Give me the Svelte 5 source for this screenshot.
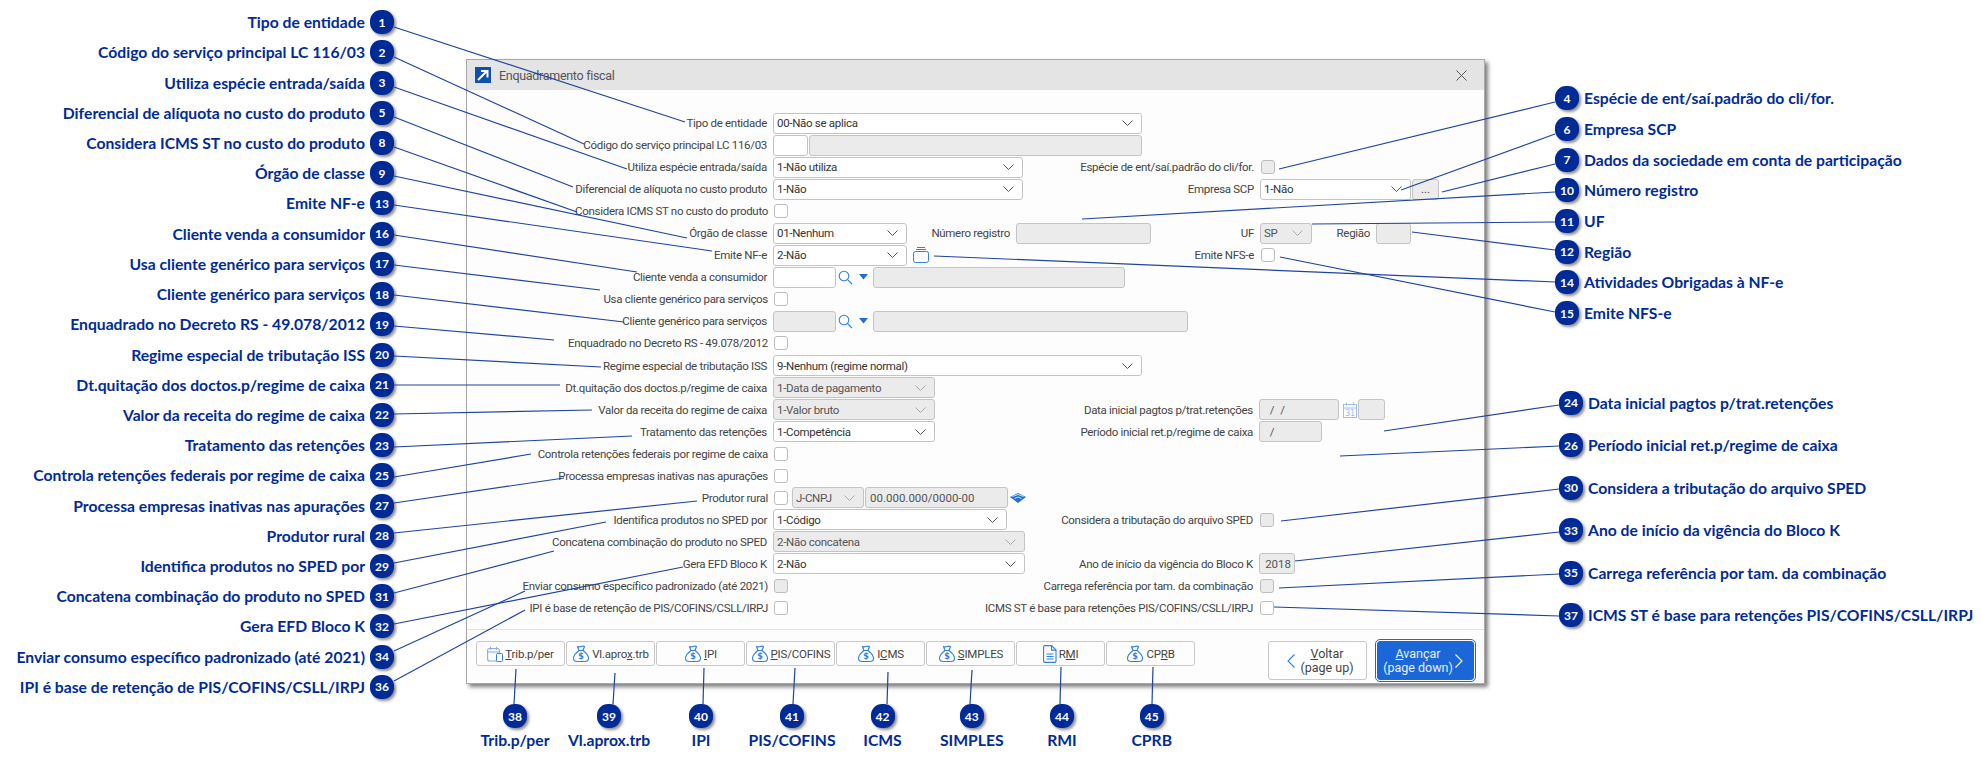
<script lang="ts">
  const left = [
    [1, 'Tipo de entidade'], [2, 'Código do serviço principal LC 116/03'], [3, 'Utiliza espécie entrada/saída'],
    [5, 'Diferencial de alíquota no custo do produto'], [8, 'Considera ICMS ST no custo do produto'], [9, 'Órgão de classe'],
    [13, 'Emite NF-e'], [16, 'Cliente venda a consumidor'], [17, 'Usa cliente genérico para serviços'],
    [18, 'Cliente genérico para serviços'], [19, 'Enquadrado no Decreto RS - 49.078/2012'], [20, 'Regime especial de tributação ISS'],
    [21, 'Dt.quitação dos doctos.p/regime de caixa'], [22, 'Valor da receita do regime de caixa'], [23, 'Tratamento das retenções'],
    [25, 'Controla retenções federais por regime de caixa'], [27, 'Processa empresas inativas nas apurações'], [28, 'Produtor rural'],
    [29, 'Identifica produtos no SPED por'], [31, 'Concatena combinação do produto no SPED'], [32, 'Gera EFD Bloco K'],
    [34, 'Enviar consumo específico padronizado (até 2021)'], [36, 'IPI é base de retenção de PIS/COFINS/CSLL/IRPJ']
  ];
  const rightTop = [
    [4, 'Espécie de ent/saí.padrão do cli/for.'], [6, 'Empresa SCP'], [7, 'Dados da sociedade em conta de participação'],
    [10, 'Número registro'], [11, 'UF'], [12, 'Região'], [14, 'Atividades Obrigadas à NF-e'], [15, 'Emite NFS-e']
  ];
  const rightLow = [
    [24, 'Data inicial pagtos p/trat.retenções'], [26, 'Período inicial ret.p/regime de caixa'], [30, 'Considera a tributação do arquivo SPED'],
    [33, 'Ano de início da vigência do Bloco K'], [35, 'Carrega referência por tam. da combinação'], [37, 'ICMS ST é base para retenções PIS/COFINS/CSLL/IRPJ']
  ];
  const bottom = [
    { n: 38, t: 'Trib.p/per', x: 513 }, { n: 39, t: 'Vl.aprox.trb', x: 611 }, { n: 40, t: 'IPI', x: 701 },
    { n: 41, t: 'PIS/COFINS', x: 791 }, { n: 42, t: 'ICMS', x: 885 }, { n: 43, t: 'SIMPLES', x: 969 },
    { n: 44, t: 'RMI', x: 1064 }, { n: 45, t: 'CPRB', x: 1151 }
  ];
  // slot width = half way to each neighbour, so every callout centres on its own x
  const bottomW = bottom.map((b, i) => {
    const a = i ? (bottom[i - 1].x + b.x) / 2 : b.x - 45;
    const z = i < bottom.length - 1 ? (bottom[i + 1].x + b.x) / 2 : b.x + 45;
    return z - a;
  });

  // leader lines, page coordinates
  const lines = [
    [394, 27, 685, 122], [394, 57, 584, 144], [394, 87, 627, 169], [394, 117, 573, 187], [394, 147, 577, 212],
    [394, 176, 687, 238], [394, 205, 712, 251], [394, 235, 637, 272], [394, 265, 600, 290], [394, 295, 624, 322],
    [394, 326, 554, 340], [394, 356, 601, 367], [394, 385, 560, 385], [394, 414, 592, 410], [394, 447, 632, 436],
    [394, 477, 531, 454], [394, 503, 564, 478], [394, 533, 697, 501], [394, 563, 606, 522], [394, 593, 554, 551],
    [394, 624, 683, 567], [394, 651, 525, 591], [394, 681, 525, 610],
    [1555, 102, 1279, 169], [1555, 134, 1401, 190], [1555, 164, 1442, 192], [1555, 192, 1082, 219], [1555, 222, 1312, 224],
    [1555, 250, 1412, 232], [1555, 282, 934, 256], [1555, 312, 1280, 257],
    [1559, 405, 1384, 431], [1559, 446, 1340, 456], [1559, 489, 1281, 521], [1559, 532, 1295, 561], [1559, 574, 1279, 588], [1559, 616, 1274, 607],
    [516, 669, 514, 704], [615, 673, 613, 704], [704, 668, 703, 704], [795, 668, 793, 704], [888, 672, 887, 704], [972, 670, 970, 704],
    [1061, 667, 1060, 704], [1153, 667, 1152, 704]
  ];
</script>

{#snippet chevron(off = false)}
  <svg class="chev" class:off viewBox="0 0 11 6" width="11" height="6"><path d="M.5.5 5.5 5.5 10.5.5" fill="none" stroke="currentColor" /></svg>
{/snippet}

{#snippet sel(w, text, off = false)}
  <div class="sel {w}" class:off><span>{text}</span>{@render chevron(off)}</div>
{/snippet}

{#snippet lookup()}
  <svg class="lupa" viewBox="0 0 15 15" width="15" height="15"><circle cx="6" cy="6" r="4.8" fill="none" stroke="#2f80e0" stroke-width="1.1" /><path d="M9.6 9.6 14 14" stroke="#2f80e0" stroke-width="1.2" /></svg>
  <svg class="caret" viewBox="0 0 9 6" width="9" height="6"><path d="M0 0h9L4.500 5.500z" fill="#1e6fd9" /></svg>
{/snippet}

{#snippet bag()}
  <svg class="ico" viewBox="0 0 18 18" width="18" height="18">
    <g fill="none" stroke="#2f80e0" stroke-width="1.1" stroke-linejoin="round">
      <path d="M5.500 1.500c1.200.6 2 .6 3.500 0s2.300-.5 3.500 0L11 5.500H7z" />
      <path d="M7 5.500C4 7.800 1.500 10.500 1.500 13.300c0 2.200 1.700 3.200 3.500 3.200h8c1.800 0 3.500-1 3.500-3.200 0-2.800-2.500-5.500-5.500-7.800" />
    </g>
    <text x="9" y="14" text-anchor="middle" class="dollar">$</text>
  </svg>
{/snippet}

{#snippet callout(item, side)}
  <div class="call {side}">
    {#if side === 'l'}<span class="ctext">{item[1]}</span>{/if}
    <span class="badge">{item[0]}</span>
    {#if side !== 'l'}<span class="ctext">{item[1]}</span>{/if}
  </div>
{/snippet}

<div class="page">
  <aside class="col-left">
    {#each left as item}{@render callout(item, 'l')}{/each}
  </aside>

  <main class="col-mid">
    <section class="dialog">
      <header class="title">
        <span class="appico"><svg viewBox="0 0 16 16" width="16" height="16"><rect width="16" height="16" fill="#0f4fb0" /><path d="M3 13 11.500 4.500M6 4h6.500v6.500" fill="none" stroke="#fff" stroke-width="2" /></svg></span>
        <span class="ttext">Enquadramento fiscal</span>
        <svg class="close" viewBox="0 0 11 11" width="11" height="11"><path d="M.5.5l10 10M10.500.5l-10 10" stroke="#555" stroke-width="1" /></svg>
      </header>

      <div class="form">
        <div class="row"><span class="lab">Tipo de entidade</span>{@render sel('w369', '00-Não se aplica')}</div>
        <div class="row"><span class="lab">Código do serviço principal LC 116/03</span><input class="inp w35" /><input class="inp off w333" disabled /></div>
        <div class="row"><span class="lab">Utiliza espécie entrada/saída</span>{@render sel('w250', '1-Não utiliza')}
          <div class="rt"><span class="lab2">Espécie de ent/saí.padrão do cli/for.</span><div class="rf"><input type="checkbox" class="ck off" disabled /></div></div></div>
        <div class="row"><span class="lab">Diferencial de alíquota no custo produto</span>{@render sel('w250', '1-Não')}
          <div class="rt"><span class="lab2">Empresa SCP</span><div class="rf">{@render sel('w151', '1-Não')}<button class="dots">...</button></div></div></div>
        <div class="row"><span class="lab ckl">Considera ICMS ST no custo do produto</span><input type="checkbox" class="ck" /></div>
        <div class="row"><span class="lab">Órgão de classe</span>{@render sel('w134', '01-Nenhum')}<span class="lab3">Número registro</span><input class="inp off w135" disabled />
          <div class="rt"><span class="lab2">UF</span><div class="rf">{@render sel('w52', 'SP', true)}<span class="lab4">Região</span><input class="inp off w35" disabled /></div></div></div>
        <div class="row"><span class="lab">Emite NF-e</span>{@render sel('w134', '2-Não')}
          <svg class="ico box" viewBox="0 0 16 16" width="16" height="16"><g fill="none" stroke="#2f80e0"><rect x=".5" y="4.500" width="15" height="11" rx="2" /><path d="M3 2.500h10M4 .5h8" /></g></svg>
          <div class="rt"><span class="lab2">Emite NFS-e</span><div class="rf"><input type="checkbox" class="ck" /></div></div></div>
        <div class="row"><span class="lab">Cliente venda a consumidor</span><input class="inp w63" />{@render lookup()}<input class="inp off w252" disabled /></div>
        <div class="row"><span class="lab ckl">Usa cliente genérico para serviços</span><input type="checkbox" class="ck" /></div>
        <div class="row"><span class="lab">Cliente genérico para serviços</span><input class="inp off w63" disabled />{@render lookup()}<input class="inp off w315" disabled /></div>
        <div class="row"><span class="lab ckl">Enquadrado no Decreto RS - 49.078/2012</span><input type="checkbox" class="ck" /></div>
        <div class="row"><span class="lab">Regime especial de tributação ISS</span>{@render sel('w369', '9-Nenhum (regime normal)')}</div>
        <div class="row"><span class="lab">Dt.quitação dos doctos.p/regime de caixa</span>{@render sel('w162', '1-Data de pagamento', true)}</div>
        <div class="row"><span class="lab">Valor da receita do regime de caixa</span>{@render sel('w162', '1-Valor bruto', true)}
          <div class="rt low"><span class="lab2">Data inicial pagtos p/trat.retenções</span><div class="rf"><input class="inp off w80" disabled value="  /  /" />
            <svg class="ico cal" viewBox="0 0 14 16" width="14" height="16"><g fill="none" stroke="#9cc0ee"><rect x=".5" y="2.500" width="13" height="13" /><path d="M.5 6h13M3.500.5v3M10.500.5v3" /></g><text x="7" y="14" text-anchor="middle" class="calnum">31</text></svg>
            <input class="inp off w27" disabled /></div></div></div>
        <div class="row"><span class="lab">Tratamento das retenções</span>{@render sel('w162', '1-Competência')}
          <div class="rt low"><span class="lab2">Período inicial ret.p/regime de caixa</span><div class="rf"><input class="inp off w63" disabled value="  /" /></div></div></div>
        <div class="row"><span class="lab ckl">Controla retenções federais por regime de caixa</span><input type="checkbox" class="ck" /></div>
        <div class="row"><span class="lab ckl">Processa empresas inativas nas apurações</span><input type="checkbox" class="ck" /></div>
        <div class="row"><span class="lab ckl">Produtor rural</span><input type="checkbox" class="ck" />{@render sel('w72', 'J-CNPJ', true)}<input class="inp off w143" disabled value="00.000.000/0000-00" />
          <svg class="ico" viewBox="0 0 16 10" width="16" height="10"><path d="M0 4 8 0l8 4-8 6z" fill="#1d70d8" /><path d="M2.500 3.500 8 1.500l5.500 2M4.500 5.500 8 4l3.500 1.500" fill="none" stroke="#fff" stroke-width=".8" /></svg></div>
        <div class="row"><span class="lab">Identifica produtos no SPED por</span>{@render sel('w234', '1-Código')}
          <div class="rt low"><span class="lab2">Considera a tributação do arquivo SPED</span><div class="rf"><input type="checkbox" class="ck off" disabled /></div></div></div>
        <div class="row"><span class="lab">Concatena combinação do produto no SPED</span>{@render sel('w252', '2-Não concatena', true)}</div>
        <div class="row"><span class="lab">Gera EFD Bloco K</span>{@render sel('w252', '2-Não')}
          <div class="rt low"><span class="lab2">Ano de início da vigência do Bloco K</span><div class="rf"><input class="inp off w36 num" disabled value="2018" /></div></div></div>
        <div class="row"><span class="lab ckl">Enviar consumo específico padronizado (até 2021)</span><input type="checkbox" class="ck off" disabled />
          <div class="rt low"><span class="lab2">Carrega referência por tam. da combinação</span><div class="rf"><input type="checkbox" class="ck off" disabled /></div></div></div>
        <div class="row"><span class="lab ckl">IPI é base de retenção de PIS/COFINS/CSLL/IRPJ</span><input type="checkbox" class="ck" />
          <div class="rt low"><span class="lab2">ICMS ST é base para retenções PIS/COFINS/CSLL/IRPJ</span><div class="rf"><input type="checkbox" class="ck" /></div></div></div>
      </div>

      <footer class="foot">
        <button class="tool">
          <svg class="ico" viewBox="0 0 16 16" width="16" height="16"><g fill="none" stroke="#7fb0ea" stroke-width="1.100"><rect x=".6" y="2.500" width="11.800" height="12.500" rx="2" /><path d="M.6 6h11.800M3.500.8v3M9.500.8v3" /></g><rect x="9.500" y="7.500" width="6" height="8" rx="1" fill="#fff" stroke="#2f80e0" /></svg>
          <span><u>T</u>rib.p/per</span></button>
        <button class="tool">{@render bag()}<span>Vl.apro<u>x</u>.trb</span></button>
        <button class="tool">{@render bag()}<span><u>I</u>PI</span></button>
        <button class="tool">{@render bag()}<span><u>P</u>IS/COFINS</span></button>
        <button class="tool">{@render bag()}<span>I<u>C</u>MS</span></button>
        <button class="tool">{@render bag()}<span><u>S</u>IMPLES</span></button>
        <button class="tool">
          <svg class="ico" viewBox="0 0 14 18" width="14" height="18"><g fill="none" stroke="#2f80e0" stroke-width="1.100"><path d="M1.500.6h7l4.500 4.500v10.900a1.400 1.400 0 0 1-1.400 1.400H1.900A1.400 1.400 0 0 1 .6 16V1.900A1.400 1.400 0 0 1 1.500.6z" /><path d="M8.500.6v4.500H13M3.500 9h7M3.500 11.500h7M3.500 14h7" /></g></svg>
          <span>R<u>M</u>I</span></button>
        <button class="tool">{@render bag()}<span>CP<u>R</u>B</span></button>
        <button class="nav back">
          <svg viewBox="0 0 8 14" width="8" height="14"><path d="M7.500.5 1 7l6.500 6.500" fill="none" stroke="#2f80e0" stroke-width="1.100" /></svg>
          <span class="navt"><u>V</u>oltar<br />(page up)</span></button>
        <button class="nav next">
          <span class="navt"><u>A</u>vançar<br />(page down)</span>
          <svg viewBox="0 0 8 14" width="8" height="14"><path d="M.5.5 7 7 .5 13.500" fill="none" stroke="#fff" stroke-width="1.100" /></svg></button>
      </footer>
    </section>

    <div class="call-bottom">
      {#each bottom as b, i}
        <div class="bitem" style="width:{bottomW[i]}px">
          <span class="badge">{b.n}</span>
          <span class="ctext">{b.t}</span>
        </div>
      {/each}
    </div>
  </main>

  <aside class="col-right">
    <div class="group-top">{#each rightTop as item}{@render callout(item, 'r')}{/each}</div>
    <div class="group-low">{#each rightLow as item}{@render callout(item, 'r')}{/each}</div>
  </aside>

  <svg class="leaders" viewBox="0 0 1981 771" width="1981" height="771">
    {#each lines as l}<line x1={l[0]} y1={l[1]} x2={l[2]} y2={l[3]} />{/each}
  </svg>
</div>

<style>
  :global(body) { margin: 0; background: #fff; }

  .page {
    position: relative;
    width: 1981px;
    height: 771px;
    overflow: hidden;
    display: grid;
    grid-template-columns: 394px 1091px 1fr;
    font-family: Roboto, sans-serif;
    font-size: 11.5px;
    color: #444;
  }

  /* callouts */
  .col-left { padding-top: 7px; }
  .call { display: flex; align-items: center; height: 30.23px; gap: 5px; white-space: nowrap; }
  .call.l { justify-content: flex-end; }
  .badge {
    flex: none;
    width: 24px;
    height: 24px;
    border-radius: 11px;
    background: #002b96;
    color: #fff;
    display: flex;
    align-items: center;
    justify-content: center;
    font: 700 12px Lato, sans-serif;
    box-shadow: 2px 2px 3px rgba(0, 0, 0, 0.45);
  }
  .ctext { font: 700 15.7px Lato, sans-serif; color: #002b96; }

  .col-right { padding: 83px 0 0 70px; }
  .group-top .call { height: 30.7px; }
  .group-low { margin: 53px 0 0 4px; }
  .group-low .call { height: 42.5px; }

  .col-mid { padding: 59px 0 0 72px; }
  .call-bottom { display: flex; margin: 20px 0 0 2px; }
  .bitem { display: flex; flex-direction: column; align-items: center; gap: 3px; }

  .leaders { position: absolute; left: 0; top: 0; pointer-events: none; }
  .leaders line { stroke: #1f449f; stroke-width: 1.2; }

  /* dialog */
  .dialog {
    box-sizing: border-box;
    width: 1019px;
    height: 625px;
    background: #fdfdfd;
    border: 1px solid #a8a8a8;
    box-shadow: 3px 3px 4px rgba(0, 0, 0, 0.5);
    display: flex;
    flex-direction: column;
    letter-spacing: -0.3px;
  }
  .title {
    flex: none;
    height: 30px;
    background: #e4e4e4;
    display: flex;
    align-items: center;
    padding: 0 17px 0 8px;
  }
  .appico { display: flex; margin-right: 8px; }
  .ttext { font-size: 12.5px; color: #555; }
  .close { margin-left: auto; }

  .form { flex: 1; padding-top: 22px; }
  .row { display: flex; align-items: center; height: 22.05px; width: 100%; white-space: nowrap; }
  .lab { flex: none; width: 300px; margin-right: 6px; text-align: right; }
  .ckl { position: relative; left: 1px; }
  .lab3 { flex: none; width: 103px; margin-right: 6px; text-align: right; }
  .lab4 { flex: none; width: 58px; margin-right: 6px; text-align: right; }
  .rt { margin-left: auto; display: flex; align-items: center; gap: 6px; }
  .rf { width: 224px; display: flex; align-items: center; }
  .rt.low .rf { width: 225px; }

  .sel, .inp {
    box-sizing: border-box;
    flex: none;
    height: 21px;
    border: 1px solid #c4c4c4;
    border-radius: 3px;
    background: #fff;
    font: inherit;
    color: #333;
  }
  .sel { display: flex; align-items: center; justify-content: space-between; padding: 0 8px 0 3px; }
  .inp { padding: 0 4px; margin: 0; }
  .sel.off, .inp.off { background: #ebebeb; color: #555; }
  .num { text-align: right; padding: 0 3px; }
  .chev { color: #555; }
  .chev.off { color: #aaa; }

  .w369 { width: 369px; }
  .w35 { width: 35px; }
  .w333 { width: 333px; margin-left: 1px; }
  .w250 { width: 250px; }
  .w151 { width: 151px; }
  .w134 { width: 134px; }
  .w135 { width: 135px; }
  .w52 { width: 52px; }
  .w63 { width: 63px; }
  .w252 { width: 252px; }
  .w315 { width: 315px; }
  .w162 { width: 162px; }
  .w80 { width: 80px; }
  .w27 { width: 27px; }
  .w72 { width: 72px; margin-left: 4px; }
  .w143 { width: 143px; margin-left: 1px; }
  .w234 { width: 234px; }
  .w36 { width: 36px; }

  .ck {
    appearance: none;
    box-sizing: border-box;
    flex: none;
    width: 14px;
    height: 14px;
    margin: 0 0 0 1px;
    border: 1px solid #bdbdbd;
    border-radius: 3px;
    background: #fff;
  }
  .ck.off { background: #ebebeb; }

  .dots {
    box-sizing: border-box;
    width: 27px;
    height: 21px;
    margin-left: 1px;
    padding: 0;
    border: 1px solid #c4c4c4;
    border-radius: 3px;
    background: #ebebeb;
    font: inherit;
    color: #444;
  }

  .lupa { margin-left: 2px; }
  .caret { margin: 0 5px 0 6px; }
  .ico { flex: none; }
  .box { margin-left: 6px; }
  .cal { margin: 0 1px 0 4px; }
  .row > .ico:last-child { margin-left: 2px; }
  .calnum { font: 8px "DejaVu Sans", sans-serif; fill: #9cc0ee; }
  .dollar { font: 700 8px "DejaVu Sans", sans-serif; fill: #2f80e0; }

  /* footer */
  .foot {
    flex: none;
    height: 54px;
    box-sizing: border-box;
    border-top: 1px solid #e2e2e2;
    padding: 11px 10px 0 9px;
    display: flex;
    align-items: flex-start;
    gap: 1px;
  }
  .tool {
    box-sizing: border-box;
    width: 89px;
    height: 25px;
    padding: 0;
    border: 1px solid #c8c8c8;
    border-radius: 3px;
    background: #fdfdfd;
    display: flex;
    align-items: center;
    justify-content: center;
    gap: 2px;
    font: inherit;
    letter-spacing: -0.2px;
    color: #444;
  }
  .nav {
    box-sizing: border-box;
    height: 39px;
    width: 99px;
    border-radius: 3px;
    display: flex;
    align-items: center;
    font: inherit;
    font-size: 12.5px;
    line-height: 14px;
    white-space: nowrap;
  }
  .navt { flex: 1; text-align: center; }
  .back { margin-left: auto; background: #fff; border: 1px solid #c8c8c8; color: #444; padding: 0 7px 0 18px; }
  .next {
    margin-left: 9px;
    width: 97px;
    background: #1b67d8;
    border: 1px solid #1b67d8;
    color: #e8f0ff;
    outline: 1px solid #1b67d8;
    outline-offset: 1px;
    padding: 0 10px 0 3px;
  }
</style>
